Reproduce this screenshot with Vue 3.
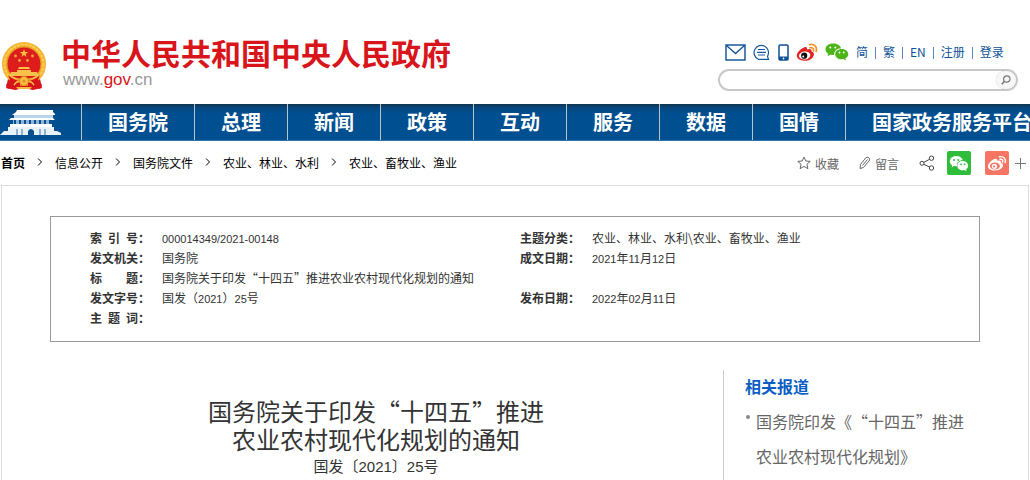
<template>
  <div class="page">
    <header class="header">
      <a class="brand" href="#">
        <svg class="brand__emblem" width="46" height="50" viewBox="0 0 46 50" aria-hidden="true">
          <path d="M8 32 L5 46 L14 48 L23 46 L32 48 L41 46 L38 32 Z" fill="#d7141a" />
          <circle cx="23" cy="22" r="22" fill="#f4b02c" />
          <circle cx="23" cy="22" r="19.500" fill="none" stroke="#fbd055" stroke-width="2" stroke-dasharray="3 1" />
          <circle cx="23" cy="22" r="17" fill="#dd1c1c" stroke="#e79a2b" />
          <path d="M23 7 L24 10 L27.200 10 L24.600 11.900 L25.600 15 L23 13.100 L20.400 15 L21.400 11.900 L18.800 10 L22 10 Z" fill="#fbc33d" />
          <g fill="#f3a63b">
            <circle cx="14.500" cy="14" r="1.400" />
            <circle cx="18.500" cy="18.500" r="1.400" />
            <circle cx="26.500" cy="18.500" r="1.400" />
            <circle cx="31.500" cy="14" r="1.400" />
          </g>
          <path d="M18 25 h10 l1 2 h-12 Z M16 28 h14 v2 h6 l2 4 H8 l2 -4 h6 Z" fill="#f8c04a" />
          <path d="M7 33 Q14 39 20 39 L18 47 L13 43 L7 47 L5 43 L9 38 Z M39 33 Q32 39 26 39 L28 47 L33 43 L39 47 L41 43 L37 38 Z" fill="#d7141a" />
          <path d="M8 33 Q15 38 21 37 M38 33 Q31 38 25 37 M13 43 Q16 38 20 40 M33 43 Q30 38 26 40" fill="none" stroke="#f8c04a" stroke-width="1.500" />
          <circle cx="23" cy="39" r="4.500" fill="#f7bd40" stroke="#d98a1c" />
          <circle cx="23" cy="39" r="1.500" fill="#e8892a" />
          <path d="M15 45 h16 l-2 2 h-12 Z" fill="#f4b93a" />
        </svg>
        <span class="brand__text">
          <span class="brand__name">中华人民共和国中央人民政府</span>
          <span class="brand__url">www.<em>gov</em>.cn</span>
        </span>
      </a>
      <div class="tools">
        <div class="tools__row">
          <a href="#" aria-label="邮箱">
            <svg width="21" height="17" viewBox="0 0 21 17"><path d="M1 1 H20 V16 H1 Z M1.500 1.500 L10.500 9.500 L19.500 1.500" fill="none" stroke="#1a5a9e" stroke-width="1.500" /></svg>
          </a>
          <a href="#" aria-label="咨询">
            <svg width="18" height="17" viewBox="0 0 18 17"><path d="M5 15 A7.200 7.200 0 1 1 14.500 12.200 L15.500 15.300 H5 M5 5.500 H12 M4 8.300 H13 M5 11 H12" fill="none" stroke="#1a5a9e" stroke-width="1.200" /></svg>
          </a>
          <a href="#" aria-label="客户端">
            <svg width="11" height="17" viewBox="0 0 11 17"><rect x="1" y="1" width="9" height="15" rx="1" fill="#fff" stroke="#0d5298" stroke-width="1.500" /><path d="M1 12.500 H10 V16 H1 Z" fill="#0d5298" /><circle cx="5.500" cy="14.500" r="0.900" fill="#fff" /></svg>
          </a>
          <a href="#" aria-label="微博">
            <svg width="22" height="19" viewBox="0 0 22 19">
              <path d="M8 4.500 C10 3.500 11.500 4.500 11 6.500 C14 5.300 16 6 15.500 8.500 C18 9.300 18.500 11 17.500 13 C16 16.500 12 18 8 17.800 C4 17.600 0.800 15.800 0.800 12.800 C0.800 10 4 6 8 4.500 Z" fill="#df2423" />
              <ellipse cx="8.700" cy="12.500" rx="5.700" ry="4" transform="rotate(-8 8.700 12.500)" fill="#fff" />
              <circle cx="8.200" cy="12.700" r="3.100" fill="#111" />
              <circle cx="7.200" cy="13.400" r="1" fill="#fff" />
              <path d="M13.500 1.700 C18 0.500 21.500 4 20.200 8.300 M14 4.700 C16.500 4 18 5.800 17.400 8" fill="none" stroke="#f0932b" stroke-width="1.700" stroke-linecap="round" />
            </svg>
          </a>
          <a href="#" aria-label="微信">
            <svg width="24" height="18" viewBox="0 0 24 18">
              <path d="M8 0.500 C3.500 0.500 0.500 3 0.500 6.300 C0.500 8.200 1.500 9.800 3.200 10.800 L2.500 13.300 L5.300 11.800 L9 12 C9 8 12 5.200 16 5.200 C15.300 2.300 12 0.500 8 0.500 Z" fill="#4db517" />
              <path d="M16.700 6 C12.800 6 10.200 8.300 10.200 11.200 C10.200 14 12.800 16.300 16.700 16.300 L18.300 16 L21 17.500 L20.300 15.200 C22.300 14.200 23.300 12.800 23.300 11.200 C23.300 8.300 20.500 6 16.700 6 Z" fill="#4db517" />
              <g fill="#fff"><circle cx="5.300" cy="4.500" r="1" /><circle cx="10.300" cy="4.500" r="1" /><circle cx="14.500" cy="9.500" r="0.900" /><circle cx="18.800" cy="9.500" r="0.900" /></g>
            </svg>
          </a>
          <ul class="langs">
            <li v-for="item in langs" :key="item"><a href="#">{{ item }}</a></li>
          </ul>
        </div>
        <form class="search" @submit.prevent>
          <input v-model="keyword" class="search__input" type="text" aria-label="搜索" />
          <button class="search__btn" type="submit" aria-label="搜索">
            <svg width="10" height="10" viewBox="0 0 10 10"><circle cx="5.800" cy="4" r="3.200" fill="none" stroke="#777" stroke-width="1.200" /><path d="M3.500 6.300 L0.800 9.200" stroke="#777" stroke-width="1.600" /></svg>
          </button>
        </form>
      </div>
    </header>

    <nav class="nav">
      <a class="nav__home" href="#" aria-label="首页">
        <svg width="62" height="28" viewBox="0 0 62 28">
          <path d="M17 1 H53 V3 L55 5 V6 H12 L16 3 Z" fill="#fff" />
          <path d="M14 6 H53 V9 H14 Z" fill="#b9d3ea" />
          <path d="M11 9 H53 L55 11 H9 Z" fill="#fff" />
          <path d="M13 11 H51 V15 H13 Z" fill="#8fb6d8" />
          <path d="M15 11 V15 M20 11 V15 M25 11 V15 M30 11 V15 M35 11 V15 M40 11 V15 M45 11 V15 M50 11 V15" stroke="#0a4f8f" stroke-width="2" />
          <path d="M10 15 H52 V18 H10 Z" fill="#fff" />
          <path d="M8 18 H54 V22 H57 L61 24 V26 H0 L4 22 H8 Z" fill="#e8f1f8" />
          <path d="M17 20 V26 M22 20 V26 M40 20 V26 M45 20 V26" stroke="#6f9dc8" stroke-width="1.500" />
          <path d="M28 26 V22 Q31 18 34 22 V26 Z" fill="#0a4f8f" />
        </svg>
      </a>
      <a v-for="item in menu" :key="item" class="nav__item" href="#">{{ item }}</a>
    </nav>

    <div class="bar">
      <ol class="crumbs">
        <li v-for="(item, i) in crumbs" :key="item">
          <svg v-if="i > 0" class="crumbs__sep" width="6" height="8" viewBox="0 0 6 8"><path d="M1 0.500 L4.500 4 L1 7.500" fill="none" stroke="#000" /></svg>
          <a href="#">{{ item }}</a>
        </li>
      </ol>
      <div class="actions">
        <button class="action" type="button">
          <svg width="14" height="14" viewBox="0 0 14 14"><path d="M7 1 L8.800 5 L13.200 5.400 L9.900 8.300 L10.900 12.700 L7 10.400 L3.100 12.700 L4.100 8.300 L0.800 5.400 L5.200 5 Z" fill="none" stroke="#666" /></svg>
          收藏
        </button>
        <button class="action" type="button">
          <svg width="12" height="14" viewBox="0 0 12 14"><path d="M1 12.500 L1.500 8.500 L7 1.500 Q9 0.500 10.500 2.500 Q11 4 10 5 L4.500 11.500 Z M3.500 9.500 L8.500 3.500" fill="none" stroke="#666" /></svg>
          留言
        </button>
        <button class="action action--share" type="button" aria-label="分享">
          <svg width="16" height="16" viewBox="0 0 16 16"><g fill="none" stroke="#444"><circle cx="3" cy="8.300" r="2" /><circle cx="12.500" cy="3.200" r="2.200" /><circle cx="12.500" cy="13" r="2.200" /><path d="M4.800 7.300 L10.600 4.300 M4.800 9.300 L10.600 12" /></g></svg>
        </button>
        <button class="badge badge--wechat" type="button" aria-label="微信">
          <svg width="20" height="17" viewBox="0 0 20 17">
            <path d="M7.300 1 C3.500 1 0.800 3.300 0.800 6.200 C0.800 7.900 1.600 9.300 3.100 10.200 L2.600 12.200 L4.900 11 L8 11.300 C7.300 7.500 10 5.200 13.800 5.200 C13.100 2.600 10.500 1 7.300 1 Z M13.700 6 C10.700 6 8.300 8 8.300 10.700 C8.300 13.400 10.700 15.300 13.700 15.300 L15.300 15 L17.500 16.200 L17 14.200 C18.500 13.300 19.200 12.100 19.200 10.700 C19.200 8 16.700 6 13.700 6 Z" fill="#fff" />
            <g fill="#2fbd3b"><circle cx="5" cy="5" r="1" /><circle cx="9.300" cy="5" r="1" /><circle cx="12" cy="9.300" r="0.900" /><circle cx="15.600" cy="9.300" r="0.900" /></g>
          </svg>
        </button>
        <button class="badge badge--weibo" type="button" aria-label="微博">
          <svg width="20" height="17" viewBox="0 0 20 17">
            <path d="M7.500 4 C9.500 3.200 10.500 4.200 10.200 5.800 C13 4.800 14.500 5.800 14 7.800 C16.500 8.700 16.500 10.500 15.500 12 C14 14.700 10.700 15.700 7.300 15.500 C3.700 15.300 1 13.700 1 11.200 C1 8.800 4 5.300 7.500 4 Z" fill="#fff" />
            <ellipse cx="7.900" cy="11" rx="5" ry="3.500" fill="#f87463" />
            <circle cx="7.500" cy="11.300" r="2.600" fill="#fff" />
            <circle cx="7" cy="11.500" r="1.100" fill="#f87463" />
            <path d="M12.500 1.800 C16.500 0.800 19.300 4 18.200 7.500 M13 4.300 C15 3.900 16.200 5.200 15.700 7" fill="none" stroke="#fff" stroke-width="1.400" stroke-linecap="round" />
          </svg>
        </button>
        <button class="action action--more" type="button" aria-label="更多">
          <svg width="11" height="11" viewBox="0 0 11 11"><path d="M5.500 0 V11 M0 5.500 H11" stroke="#777" /></svg>
        </button>
      </div>
    </div>

    <main class="content">
      <div class="info">
        <table class="info__table">
          <tbody>
            <tr v-for="(row, i) in rows" :key="i">
              <template v-for="(cell, j) in row" :key="j">
                <th scope="row">
                  <span v-if="cell.label" class="info__label">
                    <span class="info__chars"><span v-for="ch in cell.label" :key="ch">{{ ch }}</span></span>：
                  </span>
                </th>
                <td>
                  <span v-for="(part, k) in split(cell.value)" :key="k" :class="{ num: k % 2 === 1 }">{{ part }}</span>
                </td>
              </template>
            </tr>
          </tbody>
        </table>
      </div>

      <div class="columns">
        <article class="article">
          <h1 class="article__title">国务院关于印发“十四五”推进<br />农业农村现代化规划的通知</h1>
          <p class="article__no">国发〔2021〕25号</p>
        </article>
        <aside class="related">
          <h2 class="related__title">相关报道</h2>
          <ul class="related__list">
            <li><a href="#">国务院印发《“十四五”推进农业农村现代化规划》</a></li>
          </ul>
        </aside>
      </div>
    </main>
  </div>
</template>

<script setup>
import { ref } from 'vue';

const keyword = ref('');

const langs = ['简', '繁', 'EN', '注册', '登录'];

const menu = ['国务院', '总理', '新闻', '政策', '互动', '服务', '数据', '国情', '国家政务服务平台'];

const crumbs = ['首页', '信息公开', '国务院文件', '农业、林业、水利', '农业、畜牧业、渔业'];

const rows = [
  [
    { label: '索引号', value: '000014349/2021-00148' },
    { label: '主题分类', value: '农业、林业、水利\\农业、畜牧业、渔业' }
  ],
  [
    { label: '发文机关', value: '国务院' },
    { label: '成文日期', value: '2021年11月12日' }
  ],
  [
    { label: '标题', value: '国务院关于印发“十四五”推进农业农村现代化规划的通知' },
    { label: '', value: '' }
  ],
  [
    { label: '发文字号', value: '国发（2021）25号' },
    { label: '发布日期', value: '2022年02月11日' }
  ],
  [
    { label: '主题词', value: '' },
    { label: '', value: '' }
  ]
];

// odd entries are the runs of digits
const split = (text) => text.split(/([\d/-]+)/);
</script>

<style>
body {
  margin: 0;
  background: #fff;
}
</style>

<style scoped>
.page {
  display: flex;
  flex-direction: column;
  min-height: 100vh;
  overflow: hidden;
  font-family: "Noto Sans CJK SC", sans-serif;
  font-size: 12px;
  text-spacing-trim: space-all;
  color: #333;
}

a {
  color: inherit;
  text-decoration: none;
}

ul,
ol {
  list-style: none;
  margin: 0;
  padding: 0;
}

button {
  border: none;
  padding: 0;
  background: none;
  font: inherit;
  color: inherit;
  cursor: pointer;
}

svg {
  display: block;
  flex: none;
}

.header {
  display: flex;
  justify-content: space-between;
  align-items: flex-start;
  padding: 40px 12px 12px 1px;
}

.brand {
  display: flex;
  gap: 14px;
}

.brand__emblem {
  margin-top: 2px;
}

.brand__text {
  display: flex;
  flex-direction: column;
  font-family: "Liberation Sans", "Noto Sans CJK SC", sans-serif;
}

.brand__name {
  font-size: 30px;
  line-height: 30px;
  font-weight: bold;
  color: #d7151a;
  white-space: nowrap;
}

.brand__url {
  padding-left: 2px;
  font-size: 17px;
  line-height: 20px;
  color: #999;
}

.brand__url em {
  font-style: normal;
  color: #d7151a;
}

.tools {
  width: 300px;
}

.tools__row {
  display: flex;
  align-items: center;
  gap: 7px;
  height: 24px;
  padding-left: 7px;
}

.langs {
  display: flex;
  line-height: 16px;
  color: #0d5298;
}

.langs li + li::before {
  content: "";
  display: inline-block;
  width: 1px;
  height: 12px;
  margin: 0 7px;
  background: #5a87b5;
  vertical-align: -2px;
}

.search {
  display: flex;
  align-items: center;
  box-sizing: border-box;
  height: 22px;
  margin-top: 5px;
  border: 2px solid #c8c8c8;
  border-radius: 11px;
}

.search__input {
  flex: 1;
  min-width: 0;
  height: 18px;
  border: none;
  padding: 0 10px;
  outline: none;
  background: none;
  font: inherit;
}

.search__btn {
  display: flex;
  align-items: center;
  justify-content: center;
  width: 20px;
  height: 18px;
  border-radius: 9px;
  background: #f7f7f7;
  box-shadow: 0 0 1px #bbb;
}

.nav {
  display: flex;
  height: 37px;
  box-sizing: border-box;
  border-bottom: 1px solid #3174ab;
  background: linear-gradient(#123450, #06477f 4px, #004f91 10px);
  overflow: hidden;
}

.nav__home {
  flex: none;
  width: 81px;
  padding-top: 5px;
  box-sizing: border-box;
}

.nav__item {
  flex: none;
  border-left: 1px solid #b8c2cb;
  padding: 0 26px;
  font-size: 20px;
  line-height: 36px;
  font-weight: bold;
  color: #fff;
  white-space: nowrap;
}

.bar {
  display: flex;
  align-items: center;
  justify-content: space-between;
  height: 44px;
  padding: 0 4px 0 1px;
}

.crumbs,
.crumbs li {
  display: flex;
  align-items: center;
  white-space: nowrap;
}

.crumbs {
  padding-bottom: 2px;
  color: #000;
}

.crumbs li:first-child {
  font-weight: bold;
}

.crumbs__sep {
  margin: 0 12px;
}

.actions {
  display: flex;
  align-items: center;
}

.action {
  display: flex;
  align-items: center;
  gap: 4px;
  margin-right: 20px;
  color: #666;
}

.action--share {
  margin-right: 12px;
}

.action--more {
  margin-right: 0;
}

.badge {
  display: flex;
  align-items: center;
  justify-content: center;
  width: 24px;
  height: 24px;
  border-radius: 2px;
}

.badge--wechat {
  margin-right: 14px;
  background: #2fbd3b;
}

.badge--weibo {
  margin-right: 6px;
  background: #f87463;
}

.content {
  display: flex;
  flex-direction: column;
  flex: 1;
  margin: 0 1px;
  border: 1px solid #ddd;
  border-bottom: none;
  padding: 30px 48px 0;
}

.info {
  border: 1px solid #999;
  padding: 11px 39px 13px;
}

.info__table {
  width: 100%;
  table-layout: fixed;
  border-collapse: collapse;
}

.info__table th {
  width: 72px;
  height: 20px;
  padding: 0;
  text-align: left;
  vertical-align: top;
}

.info__table td {
  height: 20px;
  padding: 0;
  line-height: 20px;
  vertical-align: top;
  white-space: nowrap;
}

.info__table td:nth-child(2) {
  width: 358px;
}

.info__label {
  display: flex;
  line-height: 20px;
}

.info__chars {
  display: flex;
  justify-content: space-between;
  width: 48px;
}

.num {
  font-family: "Liberation Sans", sans-serif;
  font-size: 11px;
  line-height: 1;
}

.columns {
  display: flex;
  flex: 1;
  gap: 21px;
  padding-top: 28px;
}

.article {
  flex: 1;
  text-align: center;
}

.article__title {
  margin: 27px 0 0;
  font-size: 24px;
  line-height: 28px;
  font-weight: normal;
}

.article__no {
  margin: 4px 0 0;
  font-family: "Liberation Sans", "Noto Sans CJK SC", sans-serif;
  font-size: 15px;
  line-height: 20px;
}

.related {
  flex: none;
  width: 220px;
  border-left: 1px solid #ccc;
  padding: 0 15px 0 21px;
}

.related__title {
  margin: 4px 0 0;
  font-size: 16px;
  line-height: 24px;
  color: #0b5fc4;
}

.related__list {
  margin-top: 6px;
  font-size: 16px;
  line-height: 35px;
  color: #666;
}

.related__list li {
  display: flex;
}

.related__list li::before {
  content: "";
  flex: none;
  width: 4px;
  height: 4px;
  margin: 11px 6px 0 1px;
  border-radius: 50%;
  background: #888;
}
</style>
